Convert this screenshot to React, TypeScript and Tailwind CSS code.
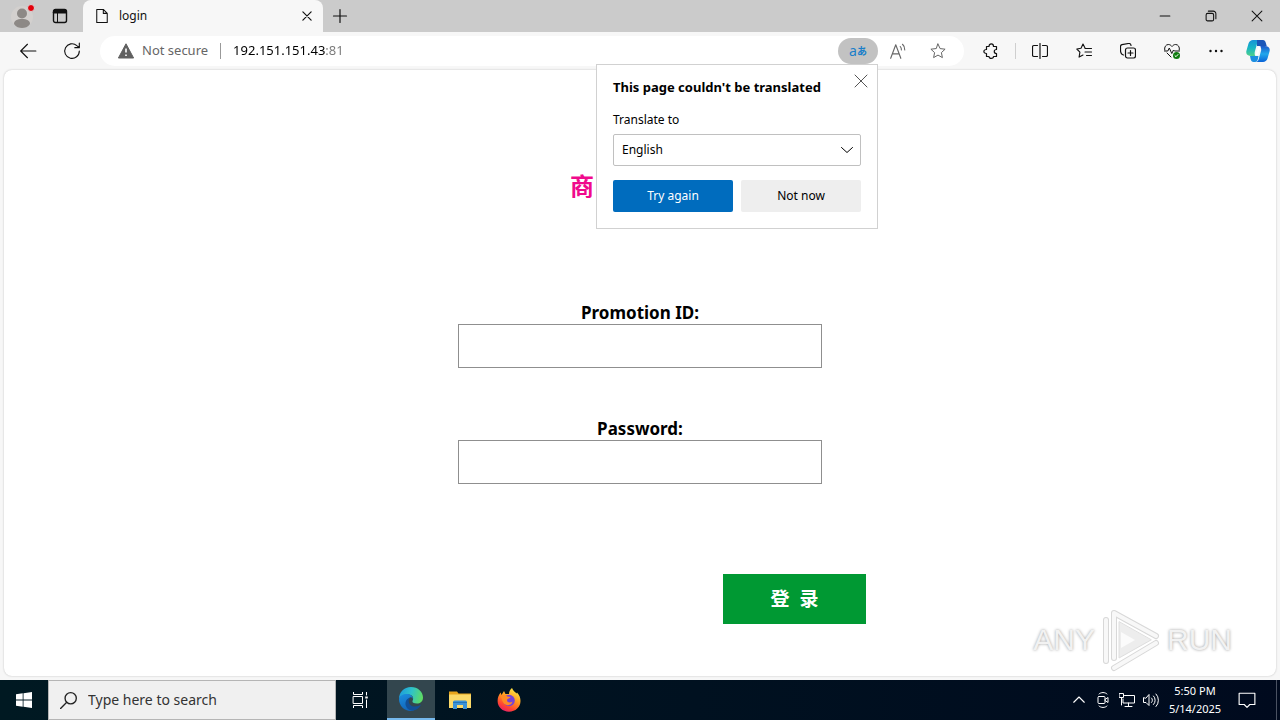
import type { ReactNode } from "react";
import { twMerge } from "tailwind-merge";

function Icon({
  children,
  className,
}: {
  children: ReactNode;
  className?: string;
}) {
  return (
    <svg
      viewBox="0 0 16 16"
      fill="none"
      stroke="currentColor"
      strokeLinecap="round"
      strokeLinejoin="round"
      className={twMerge("size-4 shrink-0", className)}
      aria-hidden="true"
    >
      {children}
    </svg>
  );
}

function IconButton({
  label,
  className,
  children,
}: {
  label: string;
  className?: string;
  children: ReactNode;
}) {
  return (
    <button
      type="button"
      aria-label={label}
      className={twMerge("flex shrink-0 items-center justify-center", className)}
    >
      {children}
    </button>
  );
}

function TabStrip() {
  return (
    <header className="flex h-8 bg-[#cbcbcb]">
      <IconButton label="Profile" className="w-11">
        <svg viewBox="0 0 26 28" className="h-7 w-[26px]" aria-hidden="true">
          <circle cx="13" cy="15" r="11" fill="#d3d0ce" />
          <circle cx="13" cy="11.500" r="5" fill="#8d8986" />
          <path d="M5 22c0-3.500 3-5 8-5s8 1.500 8 5c-2 3-5 4-8 4s-6-1-8-4z" fill="#8d8986" />
          <circle cx="22" cy="6" r="3.500" fill="#e3000b" stroke="#d8d8d8" />
        </svg>
      </IconButton>
      <IconButton label="Tab actions menu" className="w-8">
        <Icon>
          <rect x="1.500" y="1.500" width="13" height="13" rx="2" strokeWidth="1.400" />
          <path d="M1.500 3.500a2 2 0 0 1 2-2h9a2 2 0 0 1 2 2V5h-13z" fill="currentColor" />
          <path d="M5.500 5v9.500" />
        </Icon>
      </IconButton>
      <div className="ml-[7px] flex w-60 items-center rounded-t-lg bg-[#f7f7f7] pr-2 pl-3">
        <Icon className="mr-2.5 h-4 w-[14px]">
          <path d="M2 .5h7.500L14 5v10.500H2zM9.500.5V5H14" strokeWidth="1.200" />
        </Icon>
        <span className="flex-1 text-xs">login</span>
        <IconButton label="Close tab" className="size-4">
          <Icon className="size-3">
            <path d="m2.500 2.500 11 11m0-11-11 11" strokeWidth="1.600" />
          </Icon>
        </IconButton>
      </div>
      <IconButton label="New tab" className="w-[34px]">
        <Icon>
          <path d="M8 1.500v13M1.500 8h13" strokeWidth="1.200" />
        </Icon>
      </IconButton>
      <div className="ml-auto flex">
        <IconButton label="Minimize" className="w-[46px]">
          <Icon className="size-3">
            <path d="M1.500 8h13" strokeWidth="1.400" />
          </Icon>
        </IconButton>
        <IconButton label="Restore" className="w-[46px]">
          <Icon className="size-3">
            <rect x="1.500" y="4.500" width="10" height="10" rx="2" strokeWidth="1.400" />
            <path d="M4.500 1.500H11A3.500 3.500 0 0 1 14.500 5v6.500" strokeWidth="1.400" />
          </Icon>
        </IconButton>
        <IconButton label="Close" className="w-[46px]">
          <Icon className="size-3">
            <path d="m1.500 1.500 13 13m0-13-13 13" strokeWidth="1.400" />
          </Icon>
        </IconButton>
      </div>
    </header>
  );
}

function TranslatePopup() {
  return (
    <section
      role="dialog"
      aria-label="Translate"
      className="absolute top-[26px] right-0 z-20 w-[282px] border border-[#d1d1d1] bg-white px-4 pt-3 pb-4 text-xs text-black"
    >
      <div className="flex">
        <h2 className="flex-1 text-[13px] leading-5 font-bold whitespace-nowrap">
          This page couldn't be translated
        </h2>
        <IconButton label="Close" className="-mt-1 -mr-2 size-4 text-[#555]">
          <Icon>
            <path d="m2 2 12 12m0-12L2 14" />
          </Icon>
        </IconButton>
      </div>
      <label htmlFor="language" className="mt-[13px] block leading-5">
        Translate to
      </label>
      <div className="relative mt-1">
        <select
          id="language"
          className="h-8 w-full appearance-none rounded-xs border border-[#c0c0c0] bg-white px-2"
        >
          <option>English</option>
        </select>
        <Icon className="pointer-events-none absolute top-2 right-1.5">
          <path d="m2.500 5.500 5.500 5 5.500-5" />
        </Icon>
      </div>
      <div className="mt-3.5 grid grid-cols-2 gap-2">
        <button type="button" className="h-8 rounded-xs bg-[#006cbe] text-white">
          Try again
        </button>
        <button type="button" className="h-8 rounded-xs bg-[#eeeeee]">
          Not now
        </button>
      </div>
    </section>
  );
}

function CopilotLogo() {
  return (
    <svg viewBox="0 0 24 22" className="h-[22px] w-6" aria-hidden="true">
      <defs>
        <linearGradient id="copilot-left" x1="0" y1="0" x2="0" y2="1">
          <stop offset="0" stopColor="#1693d8" />
          <stop offset=".5" stopColor="#18b6c4" />
          <stop offset="1" stopColor="#4fd08a" />
        </linearGradient>
        <linearGradient id="copilot-right" x1="0" y1="0" x2="0" y2="1">
          <stop offset="0" stopColor="#1a58c8" />
          <stop offset=".5" stopColor="#22a8ec" />
          <stop offset="1" stopColor="#0a63d8" />
        </linearGradient>
      </defs>
      <path d="M13 6h5.500c4 0 6 2 5 5.500l-2 7C20.800 20.800 19 22 17 22H9c3 0 3.500-2 4-4l2-7c.6-2-.3-5-2-5z" fill="url(#copilot-right)" />
      <path d="M7 0h8c-3 0-3.500 2-4 4L9 11c-.6 2-.500 5 1 5H5.500C1.500 16-.5 14 .5 10.500l2-7C3.200 1.200 5 0 7 0z" fill="url(#copilot-left)" />
      <path d="M11 0h6c1.500 0 2.300 1 2.700 2.500l1 3.500H11z" fill="#1a56b8" />
      <path d="M4 16h8.500L12 18.500C11.500 20.500 11 22 9 22H7.500C6 22 5 21 4.600 19z" fill="#1d8fe0" />
      <path d="M12.500 6.500H15c-1 1-1.300 2.500-1.800 4L12 15H9.300c.8-1 1.100-2.500 1.600-4z" fill="#fff" />
    </svg>
  );
}

function Toolbar() {
  return (
    <nav className="flex h-[38px] items-center bg-[#f7f7f7]">
      <IconButton label="Back" className="ml-1.5 size-11">
        <Icon className="size-[18px]">
          <path d="M15 8H1.500M7.500 2l-6 6 6 6" />
        </Icon>
      </IconButton>
      <IconButton label="Refresh" className="size-11">
        <Icon className="size-[18px]">
          <path d="M14.500 8A6.500 6.500 0 1 1 12.300 3.200L14.500 5M14.500 1v4h-4" />
        </Icon>
      </IconButton>
      <div className="ml-1.5 flex h-[30px] min-w-0 flex-1 items-center rounded-full bg-white pl-[18px] text-[13px]">
        <svg viewBox="0 0 16 16" className="size-4 shrink-0" aria-hidden="true">
          <path d="M8 .8 15.600 15H.4z" fill="#606060" stroke="#606060" strokeLinejoin="round" />
          <path d="M8 5.500v4M8 11.500v1.500" stroke="#fff" strokeWidth="1.600" />
        </svg>
        <span className="ml-2 whitespace-nowrap text-[#666]">Not secure</span>
        <span className="mx-3 h-4 w-px bg-[#999]" />
        <input
          type="text"
          aria-label="Address and search bar"
          defaultValue="192.151.151.43:81"
          className="min-w-0 flex-1 bg-[linear-gradient(90deg,#000_93px,#777_93px)] bg-clip-text text-transparent caret-black"
        />
        <div className="relative">
          <button
            type="button"
            aria-label="Show translate options"
            className="flex h-[26px] w-10 items-center justify-center rounded-full bg-[#c2c2c2] text-sm text-[#1a7fc9]"
          >
            a<span className="text-[10px] font-bold">あ</span>
          </button>
          <TranslatePopup />
        </div>
        <IconButton label="Read aloud" className="w-10 text-[#666]">
          <Icon className="size-[18px]">
            <path d="m1.500 14.500 4.500-12 4.500 12M3 10.500h6M10 4a4 4 0 0 1 1 3M12 2a6 6 0 0 1 2 5" />
          </Icon>
        </IconButton>
        <IconButton label="Add to favorites" className="mr-1.5 w-10 text-[#666]">
          <Icon>
            <path d="m8 1 2.100 4.600 5 .6-3.700 3.400 1 5L8 12.100l-4.400 2.500 1-5L.9 6.200l5-.6z" />
          </Icon>
        </IconButton>
      </div>
      <IconButton label="Extensions" className="ml-[5px] w-11">
        <Icon>
          <path d="M3.500 3.500H6c0-3.500 4.500-3.500 4.500 0h3v3c-3 0-3 4 0 4v3h-3c0 2.500-4.500 2.500-4.500 0H3.500v-3c-3.500 0-3.500-4 0-4z" strokeWidth="1.200" />
        </Icon>
      </IconButton>
      <span className="mx-0.5 h-4 w-px bg-[#cfcfcf]" />
      <IconButton label="Split screen" className="w-11">
        <Icon>
          <path d="M8 .5v15M5.500 2.500H2A1.500 1.500 0 0 0 .5 4v8A1.500 1.500 0 0 0 2 13.500h3.500M10.500 2.500H14A1.500 1.500 0 0 1 15.500 4v8a1.500 1.500 0 0 1-1.500 1.500h-3.500" strokeWidth="1.200" />
        </Icon>
      </IconButton>
      <IconButton label="Favorites" className="w-11">
        <Icon>
          <path d="M9 5 7 1 5 5.200.8 6l3.100 3.100-.8 5L7 12M9 5.500h6.500M9 9h6.500M10.500 12.500h5" strokeWidth="1.100" />
        </Icon>
      </IconButton>
      <IconButton label="Collections" className="w-11">
        <Icon>
          <rect x="5.500" y="5" width="10" height="10" rx="2" strokeWidth="1.200" />
          <path d="M10.500 7.500v5M8 10h5M3.500 12C1.500 11.500.5 9 .5 7V3.500A2 2 0 0 1 2 1.700L8.500.5c1.500-.2 2.500.5 2.500 2" strokeWidth="1.200" />
        </Icon>
      </IconButton>
      <IconButton label="Browser essentials" className="w-11">
        <Icon>
          <path d="M.7 7C0 4 2 1.500 4.300 1.500 6 1.500 7 2.300 8 3.500c1-1.200 2-2 3.700-2C14 1.500 16 4 15.300 7M3 10l4 4" />
          <path d="M.5 8h3.300l1.500-3 2.500 5.500L9.500 7l1 1h5" />
          <circle cx="12.500" cy="12.500" r="3.500" fill="#107c10" stroke="none" />
          <path d="m11 12.700 1 1 2-2.200" stroke="#fff" />
        </Icon>
      </IconButton>
      <IconButton label="Settings and more" className="w-11">
        <Icon>
          <path d="M2.500 8h.01M8 8h.01M13.500 8h.01" strokeWidth="2.400" />
        </Icon>
      </IconButton>
      <IconButton label="Copilot" className="mr-0.5 w-10">
        <CopilotLogo />
      </IconButton>
    </nav>
  );
}

function LoginForm() {
  return (
    <form className="flex flex-col items-center pt-[98px] text-[17px] font-bold text-black">
      <h1 className="w-[140px] text-2xl leading-9 text-[#f00a8c]">商</h1>
      <label htmlFor="promotion" className="mt-[98px] leading-[22px]">
        Promotion ID:
      </label>
      <input
        id="promotion"
        type="text"
        className="h-11 w-[364px] max-w-full border border-[#8f8f8f] bg-white px-3"
      />
      <label htmlFor="password" className="mt-[50px] leading-[22px]">
        Password:
      </label>
      <input
        id="password"
        type="password"
        className="h-11 w-[364px] max-w-full border border-[#8f8f8f] bg-white px-3"
      />
      <div className="mt-[90px] mb-12 flex w-[452px] max-w-full justify-end">
        <button
          type="submit"
          className="h-[50px] w-[143px] bg-[#009933] text-[19px] whitespace-pre text-white"
        >
          登{"  "}录
        </button>
      </div>
    </form>
  );
}

function Watermark() {
  return (
    <div className="pointer-events-none absolute right-11 bottom-1 flex items-center font-['Liberation_Sans',sans-serif] text-[30px] leading-none text-[#f2f2f2] [text-shadow:0_0_3px_#999]">
      <span>ANY</span>
      <svg
        viewBox="0 0 64 64"
        className="mx-1 size-16"
        fill="none"
        strokeLinejoin="round"
        strokeLinecap="round"
        aria-hidden="true"
      >
        <g stroke="#d8d8d8" strokeWidth="6">
          <path d="M15 50V5l42 23M7 53V12M15 60l42-25" />
        </g>
        <g stroke="#f8f8f8" strokeWidth="4">
          <path d="M15 50V5l42 23M7 53V12M15 60l42-25" />
        </g>
        <path d="M20 14v36l32-18z" fill="#ededed" stroke="#dedede" />
        <path d="M22 24v16l14-8z" fill="#fbfbfb" />
      </svg>
      <span>RUN</span>
    </div>
  );
}

function EdgeLogo() {
  return (
    <svg viewBox="0 0 24 24" className="size-6" aria-hidden="true">
      <defs>
        <linearGradient id="edge-top" x1="0" y1=".3" x2="1" y2=".5">
          <stop offset="0" stopColor="#1c9bdc" />
          <stop offset=".5" stopColor="#2fc2c9" />
          <stop offset="1" stopColor="#5fdc62" />
        </linearGradient>
        <linearGradient id="edge-left" x1="0" y1="0" x2=".4" y2="1">
          <stop offset="0" stopColor="#1b8fe0" />
          <stop offset="1" stopColor="#1265b8" />
        </linearGradient>
      </defs>
      <path d="M0 12C0 5 5 0 12 0s12 5 12 10.500c0 4-3 6-6 6-3.500 0-5-1.200-4.500-2.500 1.500-2.500.5-6.500-4-6.500C5 7.500 1 9 0 12z" fill="url(#edge-top)" />
      <path d="M0 12c1-4 5-5.500 8.500-5 4 .5 5.500 3 5.500 5-1-1.500-2-2-3-1.500-4 2.500-2 9 3 10.500 1 .3 3 .5 4 0C16 23 14 24 12 24 5 24 0 18.500 0 12z" fill="url(#edge-left)" />
      <path d="M11 10.500c-3 4-.5 8.500 4 9 3 .2 5-.8 7-2-1 3-5 6-9 6.300-4-.8-7-4-6.500-8C6.800 13 9 11 11 10.500z" fill="#124f96" />
    </svg>
  );
}

function FolderLogo() {
  return (
    <svg viewBox="0 0 22 20" className="h-5 w-[22px]" aria-hidden="true">
      <path d="M0 1.500h8l1.500 2H22V18H0z" fill="#e8a51c" />
      <path d="M0 4.500h22V18H0z" fill="#fbd968" />
      <path d="M4 19v-7a1.500 1.500 0 0 1 1.500-1.500h11A1.500 1.500 0 0 1 18 12v7h-4v-4H8v4z" fill="#3b92d6" />
      <path d="M4 12.500h14" stroke="#2274b8" />
    </svg>
  );
}

function FirefoxLogo() {
  return (
    <svg viewBox="0 0 24 24" className="size-6" aria-hidden="true">
      <defs>
        <linearGradient id="firefox-body" x1=".8" y1="0" x2=".3" y2="1">
          <stop offset="0" stopColor="#fff04a" />
          <stop offset=".45" stopColor="#ff9a20" />
          <stop offset=".8" stopColor="#ff4133" />
          <stop offset="1" stopColor="#e5206b" />
        </linearGradient>
      </defs>
      <path d="M15 0c1 3 3 3.500 4.500 5.500L20 4.500C22.500 7 23.500 10 23.500 13c0 6-5 10.700-11.500 10.700S.6 19 .6 13c0-3.500 1-6 3-8.500L4.500 7 7 3l1.500 3H12c0-2.500 1-4.500 3-6z" fill="url(#firefox-body)" />
      <circle cx="12" cy="12.500" r="5.800" fill="#7542d9" />
      <path d="M3.500 8.500C6 6.500 9 7 10.500 8.500l3 .5c0 1.500-3.500 1.500-3.500 3 0 3 4 3 5.500 1.500-.5 4-6.500 5-9 1.500C5 13 5 10.500 3.500 8.500z" fill="#ff8b24" />
    </svg>
  );
}

function Taskbar() {
  return (
    <footer className="flex h-10 bg-linear-to-r from-[#001922] to-[#000a1e] text-white">
      <IconButton label="Start" className="w-12">
        <svg viewBox="0 0 16 16" className="size-4" fill="#fff" aria-hidden="true">
          <path d="M0 2.200 6.700 1.300v6.300H0zM7.500 1.200 16 0v7.600H7.500zM0 8.400h6.700v6.300L0 13.800zM7.500 8.400H16V16l-8.500-1.200z" />
        </svg>
      </IconButton>
      <label className="flex w-72 items-center gap-2.5 border border-[#b5b5b5] bg-[#f0f0f0] px-[11px] text-[#222]">
        <Icon className="size-[18px]">
          <circle cx="9.500" cy="6.500" r="5" strokeWidth="1.200" />
          <path d="m6 10-5.500 5.500" strokeWidth="1.200" />
        </Icon>
        <input
          type="text"
          aria-label="Search"
          placeholder="Type here to search"
          className="min-w-0 flex-1 bg-transparent text-sm placeholder:text-[#333]"
        />
      </label>
      <IconButton label="Task view" className="w-[51px] pr-1">
        <Icon>
          <path d="M1.500 0v2.500h9V0M1.500 16v-2.500h9V16M1.500 4.500h9v7h-9zM14.500 0v3M14.500 8v8" />
          <path d="M14.500 4.500v2" strokeWidth="2.500" strokeLinecap="butt" />
        </Icon>
      </IconButton>
      <IconButton label="Microsoft Edge" className="w-12 border-b-2 border-[#76b9ed] bg-[#33464e]">
        <EdgeLogo />
      </IconButton>
      <IconButton label="File Explorer" className="w-[49px]">
        <FolderLogo />
      </IconButton>
      <IconButton label="Firefox" className="w-[49px]">
        <FirefoxLogo />
      </IconButton>
      <div className="ml-auto flex">
        <IconButton label="Show hidden icons" className="w-6">
          <Icon className="size-3">
            <path d="m1 11 7-7 7 7" strokeWidth="1.500" />
          </Icon>
        </IconButton>
        <IconButton label="Meet Now" className="w-6">
          <Icon>
            <rect x="3" y="4.500" width="7" height="7" rx="1" />
            <path d="m10 7.500 3-2v5l-3-2M4 2C6 0 10 0 12 2M4 14c2 2 6 2 8 0" />
          </Icon>
        </IconButton>
        <IconButton label="Network" className="w-6">
          <Icon>
            <path d="M5.500 3.500h10v7.500H4V7M.5 1.500h4v4h-4zM2.500 5.500V13M9.500 11v3M6 14.500h7" />
          </Icon>
        </IconButton>
        <IconButton label="Volume" className="w-6">
          <Icon>
            <path d="M.5 6v4.500H3l3 3v-11l-3 3.500zM8.500 6a3 3 0 0 1 0 4.500M10.500 4a6 6 0 0 1 0 8.500M13 2a9 9 0 0 1 0 12.500" />
          </Icon>
        </IconButton>
        <button type="button" className="w-16 text-[11px] leading-[18px]">
          5:50 PM
          <br />
          5/14/2025
        </button>
        <IconButton label="Notifications" className="w-10">
          <Icon className="size-[18px]">
            <path d="M1 2h14v10h-4.500L8 14.500 5.500 12H1z" />
          </Icon>
        </IconButton>
        <button
          type="button"
          aria-label="Show desktop"
          className="ml-[9px] w-1 border-l border-[#4a5262]"
        />
      </div>
    </footer>
  );
}

export default function App() {
  return (
    <div className="flex min-h-screen flex-col bg-[#f7f7f7] font-['Noto_Sans','Noto_Sans_CJK_SC',sans-serif] text-[#111]">
      <TabStrip />
      <Toolbar />
      <main className="relative mx-1 mb-1 flex-1 rounded-lg bg-white shadow-[0_0_2px_#bbb]">
        <LoginForm />
        <Watermark />
      </main>
      <Taskbar />
    </div>
  );
}
